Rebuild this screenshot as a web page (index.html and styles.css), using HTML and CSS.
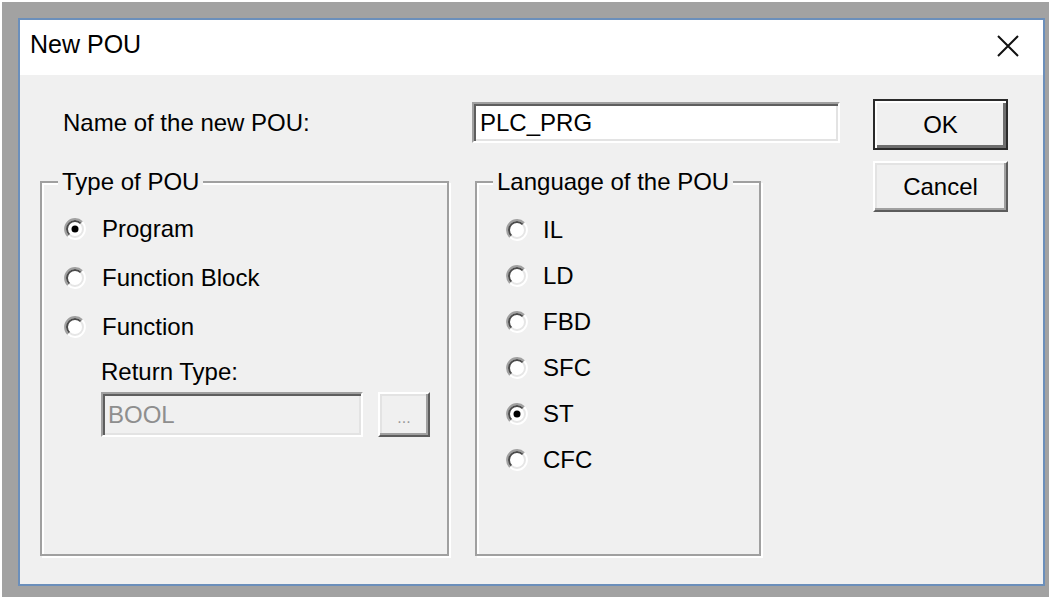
FILE: index.html
```html
<!DOCTYPE html>
<html lang="en">
<head>
<meta charset="utf-8">
<title>New POU</title>
<link rel="stylesheet" href="styles.css">
</head>
<body>
<svg class="defs" width="0" height="0" aria-hidden="true">
  <defs>
    <!-- classic sunken radio button ring -->
    <symbol id="radio" viewBox="0 0 24 24">
      <circle cx="12" cy="12" r="10" fill="#fff"/>
      <path d="M19.07 4.93A10 10 0 0 1 4.93 19.07" fill="none" stroke="#ffffff" stroke-width="2"/>
      <path d="M17.66 6.34A8 8 0 0 1 6.34 17.66" fill="none" stroke="#e6e6e6" stroke-width="2"/>
      <path d="M4.93 19.07A10 10 0 0 1 19.07 4.93" fill="none" stroke="#a0a0a0" stroke-width="2"/>
      <path d="M6.34 17.66A8 8 0 0 1 17.66 6.34" fill="none" stroke="#4a4a4a" stroke-width="2"/>
    </symbol>
    <symbol id="radio-on" viewBox="0 0 24 24">
      <use href="#radio"/>
      <circle cx="12" cy="12" r="3.5" fill="#000"/>
    </symbol>
  </defs>
</svg>

<div class="desk">
  <div class="window">
    <div class="titlebar">
      <span class="title">New POU</span>
      <svg class="close" viewBox="0 0 22 22" aria-label="Close">
        <path d="M1 1L21 21M21 1L1 21" stroke="#111" stroke-width="2" fill="none"/>
      </svg>
    </div>

    <div class="content">
      <div class="main">
        <div class="name-row">
          <label class="name-label">Name of the new POU:</label>
          <div class="edit edit-name">PLC_PRG</div>
        </div>

        <div class="groups">
          <fieldset class="group type-group">
            <legend>Type of POU</legend>
            <div class="opts type-opts">
              <div class="option"><svg class="radio"><use href="#radio-on"/></svg><span>Program</span></div>
              <div class="option"><svg class="radio"><use href="#radio"/></svg><span>Function Block</span></div>
              <div class="option"><svg class="radio"><use href="#radio"/></svg><span>Function</span></div>
            </div>
            <div class="return">
              <div class="ret-label">Return Type:</div>
              <div class="ret-row">
                <div class="edit edit-disabled">BOOL</div>
                <button class="btn btn-browse">...</button>
              </div>
            </div>
          </fieldset>

          <fieldset class="group lang-group">
            <legend>Language of the POU</legend>
            <div class="opts lang-opts">
              <div class="option"><svg class="radio"><use href="#radio"/></svg><span>IL</span></div>
              <div class="option"><svg class="radio"><use href="#radio"/></svg><span>LD</span></div>
              <div class="option"><svg class="radio"><use href="#radio"/></svg><span>FBD</span></div>
              <div class="option"><svg class="radio"><use href="#radio"/></svg><span>SFC</span></div>
              <div class="option"><svg class="radio"><use href="#radio-on"/></svg><span>ST</span></div>
              <div class="option"><svg class="radio"><use href="#radio"/></svg><span>CFC</span></div>
            </div>
          </fieldset>
        </div>
      </div>

      <div class="side">
        <button class="btn btn-default">OK</button>
        <button class="btn">Cancel</button>
      </div>
    </div>
  </div>
</div>
</body>
</html>
```

FILE: styles.css
```css
* {
  box-sizing: border-box;
}

html,
body {
  margin: 0;
  padding: 0;
  background: #fff;
}

body {
  width: 1049px;
  height: 597px;
  overflow: hidden;
  font-family: "Liberation Sans", Arial, sans-serif;
  color: #000;
}

.defs {
  position: absolute;
  width: 0;
  height: 0;
}

/* grey backdrop around the dialog */
.desk {
  margin: 2px 0 0 2px;
  width: 1047px;
  height: 595px;
  padding: 16px 4px 11px 16px;
  background: #a2a2a2;
  display: flex;
}

.window {
  flex: 1;
  display: flex;
  flex-direction: column;
  border: 2px solid #6b8fbb;
  background: #f0f0f0;
}

.titlebar {
  flex: none;
  height: 55px;
  background: #fff;
  display: flex;
  align-items: flex-start;
  justify-content: space-between;
  padding: 0 24px 0 10px;
}

.title {
  font-size: 25px;
  line-height: 49px;
}

.close {
  width: 22px;
  height: 22px;
  margin-top: 15px;
}

.content {
  flex: 1;
  display: flex;
  justify-content: space-between;
  padding: 24px 35px 0 20px;
  font-size: 24px;
}

.main {
  width: 721px;
  padding-top: 3px;
  display: flex;
  flex-direction: column;
}

.name-row {
  display: flex;
  align-items: center;
  height: 41px;
}

.name-label {
  flex: none;
  width: 432px;
  padding-left: 23px;
}

/* sunken edit field */
.edit {
  flex: none;
  height: 41px;
  display: flex;
  align-items: center;
  padding-left: 6px;
  background: #fff;
  border: 2px solid;
  border-color: #a0a0a0 #fff #fff #a0a0a0;
  box-shadow: inset 2px 2px 0 #5e5e5e, inset -2px -2px 0 #e3e3e3;
  font-size: 24px;
}

.edit-name {
  width: 368px;
}

.edit-disabled {
  width: 262px;
  height: 45px;
  padding-left: 5px;
  background: #f0f0f0;
  color: #8e8e8e;
}

.groups {
  display: flex;
  gap: 26px;
  margin-top: 25px;
  height: 388px;
}

/* etched group frame */
.group {
  margin: 0;
  padding: 0;
  min-width: 0;
  border: 2px solid #a0a0a0;
  box-shadow: inset 2px 2px 0 #fff, 2px 2px 0 #fff;
}

.group legend {
  font-size: 24px;
  line-height: 28px;
  padding: 0 4px;
  margin-left: 16px;
  background: #f0f0f0;
}

.type-group {
  width: 409px;
}

.lang-group {
  width: 286px;
}

.opts {
  display: flex;
  flex-direction: column;
}

.type-opts {
  padding: 19px 0 0 21px;
  gap: 21px;
}

.lang-opts {
  padding: 20px 0 0 28px;
  gap: 18px;
}

.option {
  display: flex;
  align-items: center;
  height: 28px;
  line-height: 28px;
}

.radio {
  width: 24px;
  height: 24px;
  flex: none;
  margin-right: 15px;
}

.lang-opts .radio {
  margin-right: 14px;
}

.return {
  padding-left: 59px;
}

.ret-label {
  margin-top: 17px;
  height: 28px;
  line-height: 28px;
}

.ret-row {
  margin-top: 6px;
  display: flex;
  gap: 15px;
}

/* raised push buttons */
.btn {
  font-family: inherit;
  font-size: 24px;
  color: #000;
  background: #f0f0f0;
  padding: 0;
  border: 2px solid;
  border-color: #fff #5c5c5c #5c5c5c #fff;
  box-shadow: inset -2px -2px 0 #a0a0a0, inset 2px 2px 0 #e3e3e3;
}

.btn-default {
  border-color: #2a2a2a;
  box-shadow: inset 2px 2px 0 #fff, inset -3px -3px 0 #6e6e6e;
}

.btn-browse {
  flex: none;
  width: 52px;
  height: 45px;
  font-size: 16px;
  color: #9a9a9a;
  padding-top: 6px;
}

.side {
  width: 135px;
  display: flex;
  flex-direction: column;
  gap: 11px;
}

.side .btn {
  height: 51px;
}
```
